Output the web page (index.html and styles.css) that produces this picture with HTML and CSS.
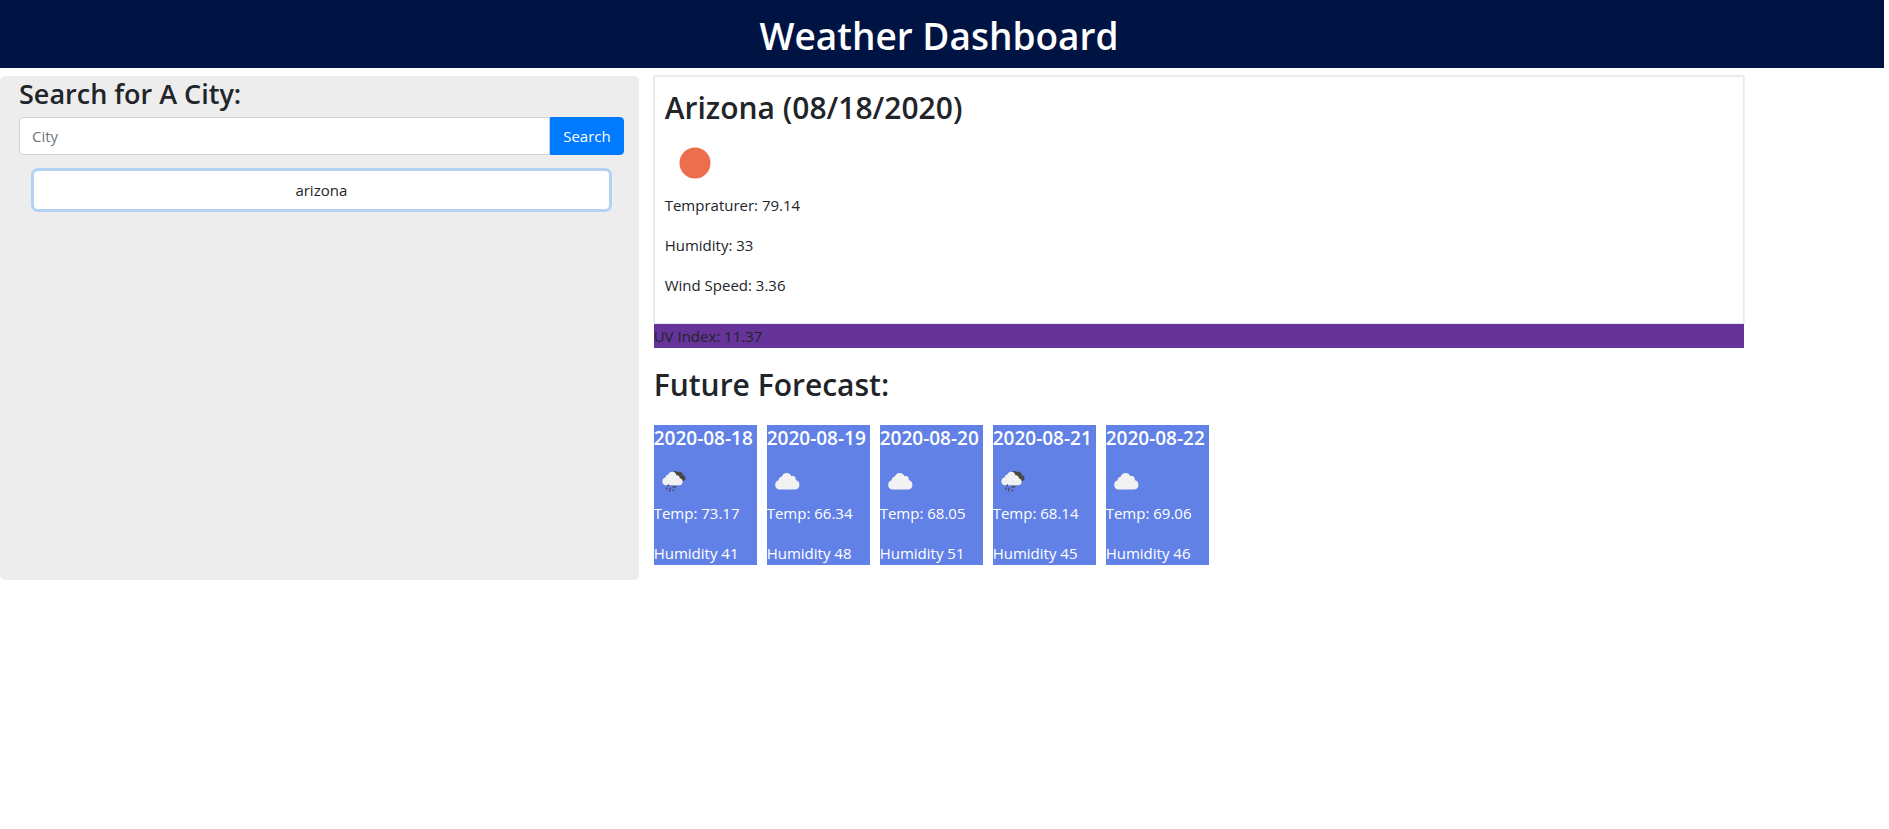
FILE: index.html
```html
<!DOCTYPE html>
<html lang="en">
<head>
<meta charset="utf-8">
<title>Weather Dashboard</title>
<link rel="stylesheet" href="styles.css">
</head>
<body>
<svg class="sprite" aria-hidden="true">
  <symbol id="cloud" viewBox="0 0 50 50">
    <path fill="#f2f2f2" d="M17 32.500a4.800 4.800 0 0 1-.4-9.300 4.300 4.300 0 0 1 3.300-3.800 5 5 0 0 1 9.400-.2 3.200 3.200 0 0 1 4.400 3.900 4.800 4.800 0 0 1-.2 9.400z" transform="translate(-5 1)"/>
  </symbol>
  <symbol id="rain" viewBox="0 0 50 50">
    <g transform="translate(-5 1)">
    <path fill="#484848" d="M22.500 17.500a3.600 3.600 0 0 1 6.200-2.400 3.500 3.500 0 0 1 5.200 3.200 2.900 2.900 0 0 1 1.300 5.400l-3.700.8z"/>
    <path fill="#f2f2f2" d="M17 28.300a3.900 3.900 0 0 1-.5-7.700 3.300 3.300 0 0 1 2.700-3 4.300 4.300 0 0 1 8.200.6 3.300 3.300 0 0 1 3.400 3 3.600 3.600 0 0 1-.5 7.100z"/>
    <path stroke="#484848" stroke-width="1.400" stroke-linecap="round" fill="none" d="M19.500 28l-.3.800M24.500 29.500l-.3.600M18 31l-.4.900M21.500 31l-.5.800M26.500 29.500l-.5.800M20.800 33.400l-.3.500M24.500 33l-.3.700"/>
    </g>
  </symbol>
</svg>
<header class="topbar"><h1>Weather Dashboard</h1></header>
<main class="layout">
  <aside class="search">
    <form class="search-form">
      <h2 class="search-title"><label for="city">Search for A City:</label></h2>
      <div class="input-group">
        <input id="city" class="field" type="text" placeholder="City">
        <button class="submit" type="button">Search</button>
      </div>
    </form>
    <button class="history" type="button">arizona</button>
  </aside>
  <div class="results">
    <section class="current">
      <h2>Arizona (08/18/2020)</h2>
      <svg class="sun" viewBox="0 0 60 60" role="img" aria-label="Clear sky"><circle cx="30" cy="30" r="15.500" fill="#ec6e4c"/></svg>
      <p>Tempraturer: 79.14</p>
      <p>Humidity: 33</p>
      <p>Wind Speed: 3.36</p>
    </section>
    <p class="uv">UV Index: 11.37</p>
    <h2 class="forecast-title">Future Forecast:</h2>
    <div class="forecast">
      <article class="day"><h3>2020-08-18</h3><svg class="icon" role="img" aria-label="Rain"><use href="#rain"/></svg><p>Temp: 73.17</p><p>Humidity 41</p></article>
      <article class="day"><h3>2020-08-19</h3><svg class="icon" role="img" aria-label="Clouds"><use href="#cloud"/></svg><p>Temp: 66.34</p><p>Humidity 48</p></article>
      <article class="day"><h3>2020-08-20</h3><svg class="icon" role="img" aria-label="Clouds"><use href="#cloud"/></svg><p>Temp: 68.05</p><p>Humidity 51</p></article>
      <article class="day"><h3>2020-08-21</h3><svg class="icon" role="img" aria-label="Rain"><use href="#rain"/></svg><p>Temp: 68.14</p><p>Humidity 45</p></article>
      <article class="day"><h3>2020-08-22</h3><svg class="icon" role="img" aria-label="Clouds"><use href="#cloud"/></svg><p>Temp: 69.06</p><p>Humidity 46</p></article>
    </div>
  </div>
</main>
</body>
</html>
```
FILE: styles.css
```css
* { box-sizing: border-box; }
body {
  margin: 0 5px 0 0;
  background: #fff;
  color: #212529;
  font: 400 15px/24px "Open Sans", "Noto Sans", sans-serif;
}
h1, h2, h3, p { margin: 0; }
h1, h2, h3 { font-weight: 600; }
button, input { font: inherit; }
.sprite { display: none; }

.topbar {
  background: #001443;
  color: #fff;
  padding: 12px 6px 8px 0;
  text-align: center;
}
.topbar h1 { font-size: 37px; line-height: 48px; }

.layout {
  display: grid;
  grid-template-columns: 33.9% minmax(0, 1fr);
  column-gap: 15px;
  align-items: start;
  padding-top: 8px;
}
.search {
  min-height: 504px;
  padding: 1px 15px 16px 19px;
  border-radius: 5px;
  background: #ededed;
}
.search-title { font-size: 27px; line-height: 34px; margin-bottom: 6px; }
.input-group { display: flex; }
.field {
  flex: 1;
  min-width: 0;
  height: 38px;
  padding: 6px 12px;
  border: 1px solid #ced4da;
  border-radius: 4px 0 0 4px;
  background: #fff;
  color: #495057;
}
.field::placeholder { color: #6c757d; opacity: 1; }
.submit {
  padding: 6px 12px;
  border: 1px solid #007bff;
  border-radius: 0 4px 4px 0;
  background: #007bff;
  color: #fff;
}
.history {
  display: block;
  width: calc(100% - 30px);
  height: 38px;
  margin: 16px 15px 0;
  border: 0;
  border-radius: 4px;
  background: #fff;
  color: #212529;
  box-shadow: 0 0 0 3px #b2d1f3;
}

.results { width: 88.6%; }
.current {
  padding: 12px 10px 26px;
  border: 1px solid #e4e9e9;
  box-shadow: 0 0 2px #ccd1d1;
}
.current h2, .forecast-title { font-size: 30px; line-height: 38px; }
.sun { display: block; width: 60px; height: 60px; margin-top: 6px; }
.current p + p { margin-top: 16px; }
.uv { position: relative; background: #663399; }
.forecast-title { margin: 18px 0 21px; }
.forecast { display: flex; gap: 10px; }
.day { width: 103px; background: #6181e7; color: #fff; }
.day h3 { font-size: 19px; line-height: 26px; }
.icon { display: block; width: 50px; height: 50px; margin: 5px 0 -5px; }
.day p + p { margin-top: 16px; }
```
